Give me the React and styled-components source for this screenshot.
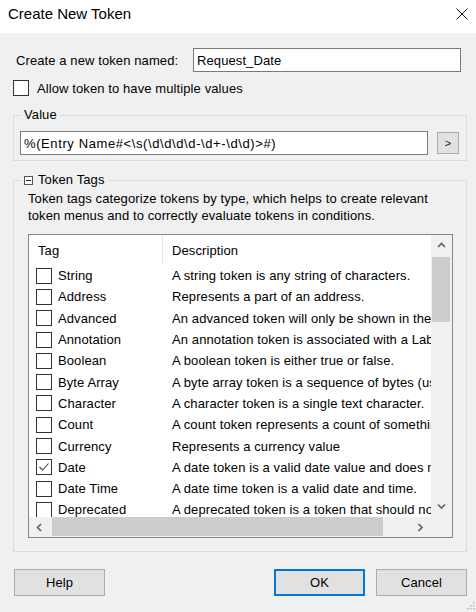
import React from 'react';
import styled, { createGlobalStyle } from 'styled-components';

const GlobalStyle = createGlobalStyle`
  html, body {
    margin: 0;
    padding: 0;
    background: #f0f0f0;
  }
  body {
    font-family: "Liberation Sans", Arial, sans-serif;
    font-size: 13px;
    letter-spacing: 0.1px;
    color: #000;
  }
  * { box-sizing: border-box; }
`;

const tags = [
  { name: 'String', desc: 'A string token is any string of characters.' },
  { name: 'Address', desc: 'Represents a part of an address.' },
  { name: 'Advanced', desc: 'An advanced token will only be shown in the advanced token menu.' },
  { name: 'Annotation', desc: 'An annotation token is associated with a Label annotation.' },
  { name: 'Boolean', desc: 'A boolean token is either true or false.' },
  { name: 'Byte Array', desc: 'A byte array token is a sequence of bytes (used for binary data).' },
  { name: 'Character', desc: 'A character token is a single text character.' },
  { name: 'Count', desc: 'A count token represents a count of something.' },
  { name: 'Currency', desc: 'Represents a currency value' },
  { name: 'Date', desc: 'A date token is a valid date value and does not include a time.', checked: true },
  { name: 'Date Time', desc: 'A date time token is a valid date and time.' },
  { name: 'Deprecated', desc: 'A deprecated token is a token that should no longer be used.' },
];

const Window = styled.div`
  position: relative;
  width: 476px;
  height: 612px;
  display: flex;
  flex-direction: column;
  overflow: hidden;
  background: #f0f0f0;
`;

const TitleBar = styled.div`
  height: 33px;
  flex: 0 0 33px;
  background: #fff;
  display: flex;
  align-items: flex-start;
  justify-content: space-between;
  padding: 4px 8px 0 8px;
  font-size: 15px;
  letter-spacing: 0;
  line-height: 20px;
  svg { margin-top: 4px; }
`;

const Body = styled.div`
  flex: 1;
  display: flex;
  flex-direction: column;
  padding: 15px 9px 0 13px;
`;

const NameRow = styled.div`
  display: flex;
  align-items: center;
  padding-left: 3px;
  height: 24px;
`;

const NameLabel = styled.label`
  flex: 0 0 177px;
`;

const TextBox = styled.div`
  height: 24px;
  width: ${p => p.$w}px;
  flex: 0 0 ${p => p.$w}px;
  border: 1px solid #7a7a7a;
  background: #fff;
  padding: 0 3px;
  display: flex;
  align-items: center;
  white-space: nowrap;
  overflow: hidden;
  letter-spacing: ${p => p.$ls || 0.1}px;
`;

const CheckRow = styled.div`
  margin-top: 8px;
  display: flex;
  align-items: center;
  gap: 8px;
  height: 16px;
`;

const Box = styled.span`
  width: 16px;
  height: 16px;
  flex: 0 0 16px;
  border: 1px solid #333;
  background: #fff;
  display: inline-flex;
  align-items: center;
  justify-content: center;
`;

const Group = styled.fieldset`
  margin: ${p => p.$mt}px 0 0 0;
  min-width: 0;
  border: 1px solid #dcdcdc;
  padding: ${p => p.$pad};
`;

const Legend = styled.legend`
  padding: 0 3px;
  margin-left: ${p => p.$ml}px;
  line-height: 16px;
  height: 16px;
`;

const LegendInner = styled.span`
  display: inline-flex;
  align-items: center;
  gap: 5px;
`;

const ValueRow = styled.div`
  display: flex;
  align-items: center;
  gap: 9px;
`;

const SmallButton = styled.div`
  width: 22px;
  height: 22px;
  background: #e1e1e1;
  border: 1px solid #adadad;
  display: flex;
  align-items: center;
  justify-content: center;
  font-size: 11px;
  color: #222;
`;

const Blurb = styled.p`
  margin: 0;
  line-height: 17px;
`;

const ListView = styled.div`
  margin-top: 10px;
  height: 304px;
  border: 1px solid #828790;
  background: #fff;
  display: grid;
  grid-template-columns: 1fr 21px;
  grid-template-rows: 1fr 20px;
`;

const Viewport = styled.div`
  overflow: hidden;
  min-width: 0;
`;

const HeaderRow = styled.div`
  display: grid;
  grid-template-columns: 134px 1fr;
  height: 30px;
`;

const HeaderCell = styled.div`
  display: flex;
  align-items: center;
  padding-left: 9px;
  border-right: ${p => (p.$sep ? '1px solid #e5e5e5' : 'none')};
`;

const Row = styled.div`
  display: grid;
  grid-template-columns: 134px 1fr;
  height: 21.3px;
  align-items: center;
`;

const TagCell = styled.div`
  display: flex;
  align-items: center;
  gap: 6px;
  padding-left: 7px;
  white-space: nowrap;
`;

const DescCell = styled.div`
  padding-left: 9px;
  white-space: nowrap;
  overflow: hidden;
`;

const VScroll = styled.div`
  background: #f0f0f0;
  display: flex;
  flex-direction: column;
`;

const HScroll = styled.div`
  background: #f0f0f0;
  display: flex;
  min-width: 0;
`;

const Arrow = styled.div`
  flex: 0 0 21px;
  display: flex;
  align-items: center;
  justify-content: center;
`;

const Track = styled.div`
  flex: 1;
  display: flex;
  flex-direction: ${p => (p.$vertical ? 'column' : 'row')};
`;

const Thumb = styled.div`
  background: #cdcdcd;
  ${p =>
    p.$vertical
      ? 'margin: 1px 2px 0 1px; height: 65px;'
      : 'margin: 0 0 1px 2px; width: 331px;'}
`;

const Corner = styled.div`
  background: #f0f0f0;
`;

const ButtonRow = styled.div`
  margin-top: 17px;
  display: flex;
  align-items: center;
  padding-left: 1px;
`;

const Button = styled.div`
  width: 91px;
  height: 27px;
  background: #e1e1e1;
  border: ${p => (p.$default ? '2px solid #0078d7' : '1px solid #adadad')};
  display: flex;
  align-items: center;
  justify-content: center;
  margin-left: ${p => p.$ml || 0}px;
`;

const Grip = styled.svg`
  position: absolute;
  right: 1px;
  bottom: 2px;
`;

const Chevron = ({ dir }) => {
  const pts = {
    up: '1,5 4.5,1.5 8,5',
    down: '1,1.5 4.5,5 8,1.5',
    left: '5,1 1.5,4.5 5,8',
    right: '1.5,1 5,4.5 1.5,8',
  }[dir];
  const vertical = dir === 'up' || dir === 'down';
  return (
    <svg width={vertical ? 9 : 7} height={vertical ? 7 : 9} viewBox={vertical ? '0 0 9 7' : '0 0 7 9'}>
      <polyline points={pts} fill="none" stroke="#606060" strokeWidth="1.6" />
    </svg>
  );
};

const CheckBox = ({ checked }) => (
  <Box>
    {checked && (
      <svg width="12" height="12" viewBox="0 0 12 12">
        <polyline points="1.5,6 4.5,9 10.5,2.5" fill="none" stroke="#444" strokeWidth="1.1" />
      </svg>
    )}
  </Box>
);

const App = () => {
  return (
    <Window>
      <GlobalStyle />
      <TitleBar>
        <span>Create New Token</span>
        <svg width="12" height="12" viewBox="0 0 12 12">
          <path d="M0.5 0.5 L11.5 11.5 M11.5 0.5 L0.5 11.5" stroke="#111" strokeWidth="1" />
        </svg>
      </TitleBar>
      <Body>
        <NameRow>
          <NameLabel>Create a new token named:</NameLabel>
          <TextBox $w={268}>Request_Date</TextBox>
        </NameRow>
        <CheckRow>
          <CheckBox />
          <span>Allow token to have multiple values</span>
        </CheckRow>

        <Group $mt={11} $pad="8px 7px 5px 6px">
          <Legend $ml={1}>Value</Legend>
          <ValueRow>
            <TextBox $w={408} $ls={0.6}>%(Entry Name#&lt;\s(\d\d\d\d-\d+-\d\d)&gt;#)</TextBox>
            <SmallButton>&gt;</SmallButton>
          </ValueRow>
        </Group>

        <Group $mt={11} $pad="2px 13px 13px 14px">
          <Legend $ml={-7}>
            <LegendInner>
              <svg width="9" height="9" viewBox="0 0 9 9">
                <rect x="0.5" y="0.5" width="8" height="8" fill="#fff" stroke="#555" />
                <path d="M2 4.5 H7" stroke="#222" strokeWidth="1" />
              </svg>
              Token Tags
            </LegendInner>
          </Legend>
          <Blurb>
            Token tags categorize tokens by type, which helps to create relevant
            <br />
            token menus and to correctly evaluate tokens in conditions.
          </Blurb>
          <ListView>
            <Viewport>
              <HeaderRow>
                <HeaderCell $sep>Tag</HeaderCell>
                <HeaderCell>Description</HeaderCell>
              </HeaderRow>
              {tags.map(t => (
                <Row key={t.name}>
                  <TagCell>
                    <CheckBox checked={t.checked} />
                    {t.name}
                  </TagCell>
                  <DescCell>{t.desc}</DescCell>
                </Row>
              ))}
            </Viewport>
            <VScroll>
              <Arrow><Chevron dir="up" /></Arrow>
              <Track $vertical>
                <Thumb $vertical />
              </Track>
              <Arrow><Chevron dir="down" /></Arrow>
            </VScroll>
            <HScroll>
              <Arrow><Chevron dir="left" /></Arrow>
              <Track>
                <Thumb />
              </Track>
              <Arrow><Chevron dir="right" /></Arrow>
            </HScroll>
            <Corner />
          </ListView>
        </Group>

        <ButtonRow>
          <Button>Help</Button>
          <Button $default $ml={169}>OK</Button>
          <Button $ml={11}>Cancel</Button>
        </ButtonRow>
      </Body>
      <Grip width="8" height="8" viewBox="0 0 8 8">
        <rect x="6" y="0" width="1.5" height="1.5" fill="#b5b5b5" />
        <rect x="3" y="3" width="1.5" height="1.5" fill="#b5b5b5" />
        <rect x="6" y="3" width="1.5" height="1.5" fill="#b5b5b5" />
        <rect x="0" y="6" width="1.5" height="1.5" fill="#b5b5b5" />
        <rect x="3" y="6" width="1.5" height="1.5" fill="#b5b5b5" />
        <rect x="6" y="6" width="1.5" height="1.5" fill="#b5b5b5" />
      </Grip>
    </Window>
  );
};

export default App;
